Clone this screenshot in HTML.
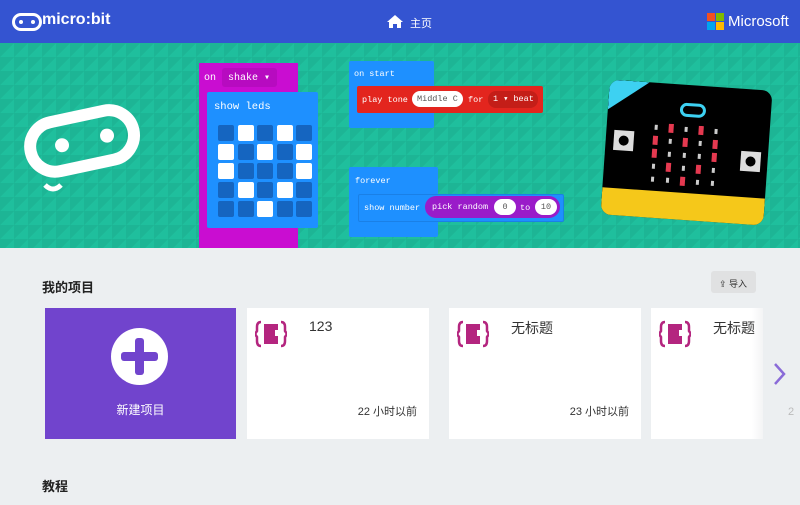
<!DOCTYPE html>
<html><head><meta charset="utf-8"><style>
*{margin:0;padding:0;box-sizing:border-box}
body{width:800px;height:505px;overflow:hidden;background:#ECEFF1;font-family:"Liberation Sans","Noto Sans CJK SC",sans-serif;position:relative}
.hdr{position:absolute;left:0;top:0;width:800px;height:43px;background:#3454D1;color:#fff}
.hero{position:absolute;left:0;top:43px;width:800px;height:205px;background:#1FBF9D;overflow:hidden;
background-image:linear-gradient(135deg,rgba(0,0,0,.05) 50%,transparent 50%);background-size:14px 14px}
.abs{position:absolute}
.mono{font-family:"Liberation Mono","DejaVu Sans Mono",monospace;font-size:8.5px;color:#fff;white-space:nowrap}
.led{position:absolute;width:16px;height:16px;border-radius:2px}
.card{position:absolute;top:308px;height:131px;background:#fff}
.t{position:absolute;left:62px;top:10px;font-size:14px;color:#333}
.d{position:absolute;right:12px;bottom:20px;font-size:11px;color:#333}
</style></head><body>
<div class="hdr">
 <svg class="abs" style="left:12px;top:13px" width="30" height="18"><rect x="1.5" y="1.5" width="27" height="15" rx="7.5" fill="none" stroke="#fff" stroke-width="3"/><circle cx="9" cy="9" r="2" fill="#fff"/><circle cx="21" cy="9" r="2" fill="#fff"/></svg>
 <div class="abs" style="left:42px;top:11px;font-size:16px;font-weight:bold">micro:bit</div>
 <svg class="abs" style="left:387px;top:14px" width="16" height="14"><path d="M8 1L0 8h2v6h4V10h4v4h4V8h2z" fill="#fff"/></svg>
 <div class="abs" style="left:410px;top:15px;font-size:11px">主页</div>
 <div class="abs" style="left:707px;top:13px;width:8px;height:8px;background:#F25022"></div>
 <div class="abs" style="left:716px;top:13px;width:8px;height:8px;background:#7FBA00"></div>
 <div class="abs" style="left:707px;top:22px;width:8px;height:8px;background:#00A4EF"></div>
 <div class="abs" style="left:716px;top:22px;width:8px;height:8px;background:#FFB900"></div>
 <div class="abs" style="left:728px;top:13px;font-size:15px">Microsoft</div>
</div>
<div class="hero">
 <svg class="abs" style="left:20px;top:55px" width="125" height="100"><g transform="rotate(-12 62 45)"><rect x="10" y="18" width="105" height="50" rx="25" fill="none" stroke="#fff" stroke-width="12"/><circle cx="42" cy="43" r="7" fill="#fff"/><circle cx="88" cy="43" r="7" fill="#fff"/></g><path d="M25 87q8 8 16 0" stroke="#fff" stroke-width="5" fill="none"/></svg>
 <div class="abs" style="left:199px;top:20px;width:99px;height:190px;background:#C90DD1"></div>
 <div class="abs mono" style="left:204px;top:30px;font-size:10px">on</div>
 <div class="abs mono" style="left:222px;top:25px;width:55px;height:19px;background:#B70BC0;border-radius:3px;padding:4px 6px;font-size:10px">shake ▾</div>
 <div class="abs" style="left:207px;top:49px;width:111px;height:136px;background:#1E90FF;border-radius:2px"></div>
 <div class="abs mono" style="left:214px;top:58px;font-size:10.5px">show leds</div>
 <div id="g"></div>
 <div class="abs" style="left:349px;top:18px;width:85px;height:67px;background:#1E90FF;border-radius:2px"></div>
 <div class="abs mono" style="left:354px;top:26px">on start</div>
 <div class="abs" style="left:357px;top:43px;width:186px;height:27px;background:#E3251E;border-radius:2px"></div>
 <div class="abs mono" style="left:362px;top:52px">play tone</div>
 <div class="abs mono" style="left:412px;top:48px;width:51px;height:16px;background:#fff;color:#555;border-radius:8px;padding:3px 5px">Middle C</div>
 <div class="abs mono" style="left:468px;top:52px">for</div>
 <div class="abs mono" style="left:488px;top:48px;width:50px;height:17px;background:#C41E18;border-radius:8px;padding:3px 5px">1 ▾ beat</div>
 <div class="abs" style="left:349px;top:124px;width:89px;height:70px;background:#1E90FF;border-radius:2px"></div>
 <div class="abs mono" style="left:355px;top:133px">forever</div>
 <div class="abs" style="left:358px;top:151px;width:206px;height:28px;background:#1E90FF;border:1px solid #1a80e6;border-radius:2px"></div>
 <div class="abs mono" style="left:364px;top:160px">show number</div>
 <div class="abs mono" style="left:425px;top:153px;width:135px;height:22px;background:#9A1BC9;border-radius:11px;padding:6px 7px">pick random</div>
 <div class="abs mono" style="left:494px;top:156px;width:22px;height:16px;background:#fff;color:#555;border-radius:8px;text-align:center;padding-top:3px">0</div>
 <div class="abs mono" style="left:520px;top:160px">to</div>
 <div class="abs mono" style="left:535px;top:156px;width:22px;height:16px;background:#fff;color:#555;border-radius:8px;text-align:center;padding-top:3px">10</div>
 <div class="abs" style="left:605px;top:42px;width:163px;height:135px;background:#000;border-radius:10px;transform:rotate(4deg);overflow:hidden">
  <div class="abs" style="left:0;top:0;width:40px;height:30px;background:#3DD1F2;clip-path:polygon(0 0,100% 0,0 100%)"></div>
  <div class="abs" style="left:72px;top:18px;width:26px;height:14px;border:3px solid #3DD1F2;border-radius:7px"></div>
  <div class="abs" style="left:8px;top:50px;width:20px;height:20px;background:#ddd"><div style="margin:5px;width:10px;height:10px;border-radius:5px;background:#000"></div></div>
  <div class="abs" style="left:136px;top:62px;width:20px;height:20px;background:#ddd"><div style="margin:5px;width:10px;height:10px;border-radius:5px;background:#000"></div></div>
  <div class="abs" style="left:0;top:108px;width:163px;height:28px;background:#F5C81A"></div>
  <svg class="abs" style="left:45px;top:40px" width="75" height="68" id="ml"></svg>
 </div>
</div>
<div class="abs" style="left:42px;top:277px;font-size:13px;color:#222;font-weight:bold">我的项目</div>
<div class="abs" style="left:711px;top:271px;width:45px;height:22px;background:#E0E1E2;border-radius:3px;font-size:9px;color:#333;padding:6px 0 0 8px">⇪ 导入</div>
<div class="card" style="left:45px;width:191px;background:#7144CD">
 <div class="abs" style="left:66px;top:20px;width:57px;height:57px;border-radius:50%;background:#fff"></div>
 <div class="abs" style="left:90px;top:30px;width:9px;height:37px;background:#7144CD;border-radius:3px"></div>
 <div class="abs" style="left:76px;top:44px;width:37px;height:9px;background:#7144CD;border-radius:3px"></div>
 <div class="abs" style="left:0;top:93px;width:191px;text-align:center;color:#fff;font-size:12px">新建项目</div>
</div>
<div class="card" style="left:247px;width:182px"><svg class="abs" style="left:8px;top:12px" width="32" height="28"><path d="M6 2q-4 0-4 5v4l-2 3 2 3v4q0 5 4 5M26 2q4 0 4 5v4l2 3-2 3v4q0 5-4 5" stroke="#B4257F" stroke-width="2.5" fill="none"/><path d="M9 4h14v6h-3v6h3v8H9z" fill="#B4257F"/></svg><div class="t">123</div><div class="d">22 小时以前</div></div>
<div class="card" style="left:449px;width:192px"><svg class="abs" style="left:8px;top:12px" width="32" height="28"><path d="M6 2q-4 0-4 5v4l-2 3 2 3v4q0 5 4 5M26 2q4 0 4 5v4l2 3-2 3v4q0 5-4 5" stroke="#B4257F" stroke-width="2.5" fill="none"/><path d="M9 4h14v6h-3v6h3v8H9z" fill="#B4257F"/></svg><div class="t">无标题</div><div class="d">23 小时以前</div></div>
<div class="card" style="left:651px;width:112px;background:linear-gradient(90deg,#fff 90%,#f3f4f5)"><svg class="abs" style="left:8px;top:12px" width="32" height="28"><path d="M6 2q-4 0-4 5v4l-2 3 2 3v4q0 5 4 5M26 2q4 0 4 5v4l2 3-2 3v4q0 5-4 5" stroke="#B4257F" stroke-width="2.5" fill="none"/><path d="M9 4h14v6h-3v6h3v8H9z" fill="#B4257F"/></svg><div class="t">无标题</div></div>
<div class="abs" style="left:788px;top:406px;font-size:11px;color:#bbb">2</div>
<svg class="abs" style="left:771px;top:362px" width="16" height="24"><path d="M4 2l9 10-9 10" stroke="#8A6BD8" stroke-width="2.5" fill="none"/></svg>
<div class="abs" style="left:42px;top:476px;font-size:13px;color:#222;font-weight:bold">教程</div>
<script>
var p=[[0,1,0,1,0],[1,0,1,0,1],[1,0,0,0,1],[0,1,0,1,0],[0,0,1,0,0]],h='';
for(var r=0;r<5;r++)for(var c=0;c<5;c++)h+='<div class="led" style="left:'+(218+c*19.5)+'px;top:'+(82+r*19)+'px;background:'+(p[r][c]?'#fff':'#1565C0')+'"></div>';
document.getElementById('g').outerHTML=h;
var m=[[0,1,0,1,0],[1,0,1,0,1],[1,0,0,0,1],[0,1,0,1,0],[0,0,1,0,0]],s='';
for(r=0;r<5;r++)for(c=0;c<5;c++)s+=m[r][c]?'<rect x="'+(c*15+2)+'" y="'+(r*13)+'" width="5" height="9" fill="#E53950"/>':'<rect x="'+(c*15+3)+'" y="'+(r*13+2)+'" width="3" height="5" fill="#ccc"/>';
document.getElementById('ml').innerHTML=s;
</script>
</body></html>
